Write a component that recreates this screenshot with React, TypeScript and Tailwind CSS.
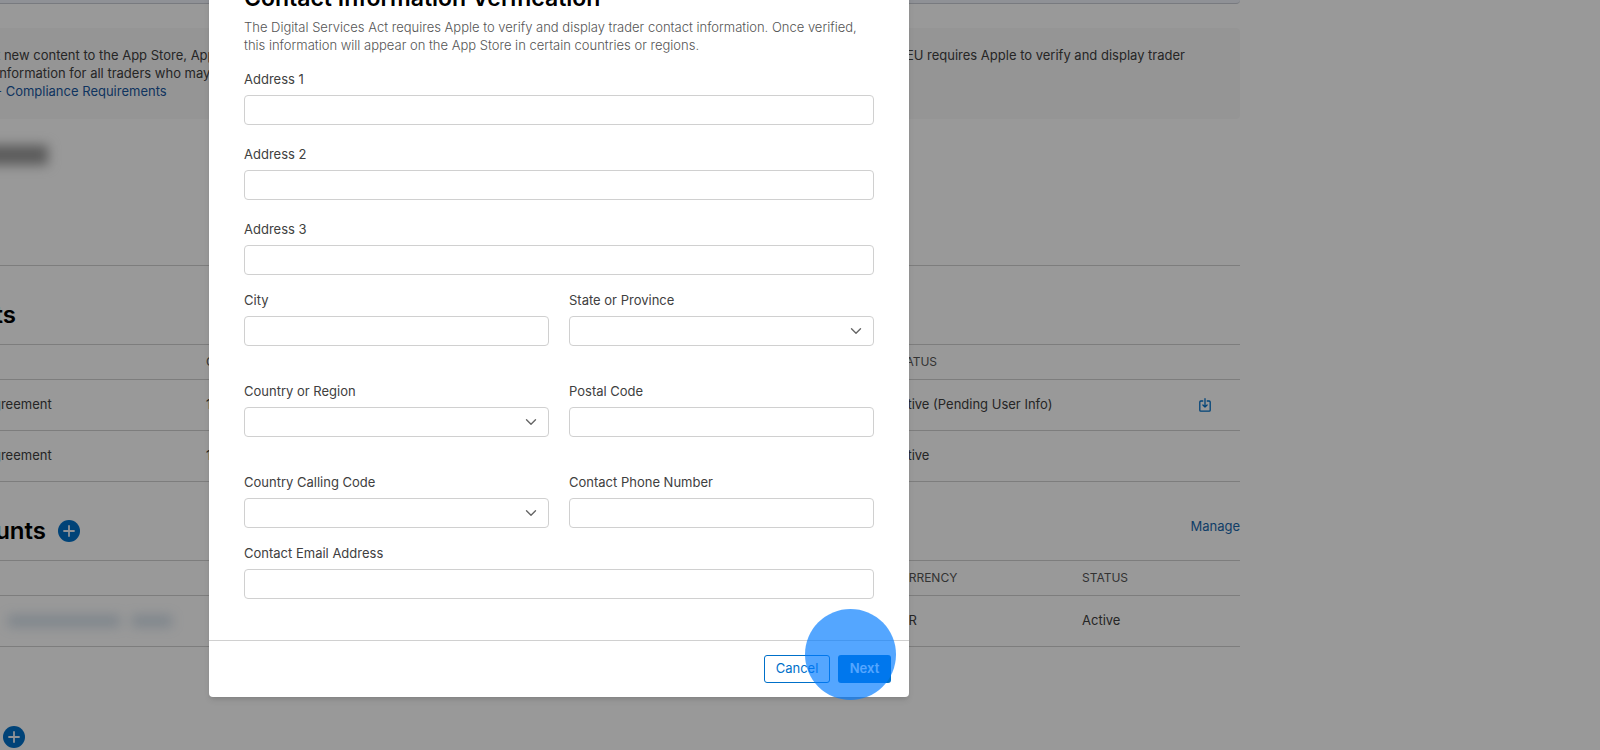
import { ReactNode } from "react";

interface FieldProps {
  id: string;
  label: string;
}

const TextField = ({ id, label }: FieldProps) => (
  <div className="flex flex-col gap-[7px]">
    <label htmlFor={id} className="leading-[18px] text-[#404040]">
      {label}
    </label>
    <input
      id={id}
      type="text"
      className="h-[30px] w-full rounded-sm border border-[#d0d0d0] bg-white px-2 outline-none"
    />
  </div>
);

const SelectField = ({ id, label }: FieldProps) => (
  <div className="flex flex-col gap-[7px]">
    <label htmlFor={id} className="leading-[18px] text-[#404040]">
      {label}
    </label>
    <div className="relative">
      <select
        id={id}
        className="block h-[30px] w-full appearance-none rounded-sm border border-[#d0d0d0] bg-white px-2 outline-none"
      >
        <option value="" />
      </select>
      <svg
        className="pointer-events-none absolute top-2.5 right-3 h-2.5 w-3"
        viewBox="0 0 12 10"
        fill="none"
        stroke="#666"
        strokeWidth="1.4"
        strokeLinecap="round"
        strokeLinejoin="round"
      >
        <path d="M1.5 2.8 6 7.3l4.5-4.5" />
      </svg>
    </div>
  </div>
);

const AddButton = ({ label }: { label: string }) => (
  <button
    aria-label={label}
    className="flex size-[22px] shrink-0 items-center justify-center rounded-full bg-[#0070c9] text-[#eef4fa]"
  >
    <svg viewBox="0 0 12 12" className="size-3" stroke="currentColor" strokeWidth="1.8" strokeLinecap="round">
      <path d="M6 1v10M1 6h10" />
    </svg>
  </button>
);

const Th = ({ children }: { children?: ReactNode }) => (
  <th className="h-[35px] p-0 text-left text-xs font-normal text-[#555]">{children}</th>
);

const DownloadIcon = () => (
  <svg
    className="h-3.5 w-3"
    viewBox="0 0 12 14"
    fill="none"
    stroke="currentColor"
    strokeWidth="1.3"
    strokeLinecap="round"
    strokeLinejoin="round"
  >
    <path d="M3.8 3H1.800a1 1 0 0 0-1 1v8.200a1 1 0 0 0 1 1h8.400a1 1 0 0 0 1-1V4a1 1 0 0 0-1-1H8.200" />
    <path d="M6 .7v8.300M3.900 7 6 9.100 8.100 7" />
  </svg>
);

const Agreements = () => (
  <section>
    <div className="flex h-[78px] items-center pt-5">
      <h2 className="flex w-8 justify-end text-2xl font-semibold text-black">Agreements</h2>
    </div>
    <table className="w-full table-fixed border-collapse">
      <colgroup>
        <col className="w-[222px]" />
        <col className="w-[685px]" />
        <col />
        <col className="w-[41px]" />
      </colgroup>
      <thead>
        <tr className="border-y border-[#d0d0d0]">
          <Th />
          <Th>COUNTRIES</Th>
          <Th>STATUS</Th>
          <Th />
        </tr>
      </thead>
      <tbody>
        <tr className="h-[51px] border-b border-[#d0d0d0]">
          <td>Agreement</td>
          <td>175</td>
          <td>Active (Pending User Info)</td>
          <td>
            <button aria-label="Download agreement" className="flex text-[#0070c9]">
              <DownloadIcon />
            </button>
          </td>
        </tr>
        <tr className="h-[51px] border-b border-[#d0d0d0]">
          <td>Agreement</td>
          <td>175</td>
          <td>Active</td>
          <td />
        </tr>
      </tbody>
    </table>
  </section>
);

const BankAccounts = () => (
  <section>
    <div className="flex h-[78px] items-center justify-between">
      <div className="flex items-center gap-3 pt-5">
        <h2 className="flex w-[62px] justify-end text-2xl font-semibold text-black">Accounts</h2>
        <AddButton label="Add bank account" />
      </div>
      <a href="#manage" className="pt-3 text-[#1a68ad]">
        Manage
      </a>
    </div>
    <table className="w-full table-fixed border-collapse">
      <colgroup>
        <col className="w-[907px]" />
        <col className="w-[191px]" />
        <col />
      </colgroup>
      <thead>
        <tr className="border-y border-[#d0d0d0]">
          <Th />
          <Th>CURRENCY</Th>
          <Th>STATUS</Th>
        </tr>
      </thead>
      <tbody>
        <tr className="h-[51px] border-b border-[#d0d0d0]">
          <td>
            <div className="flex gap-3 pl-6 blur-[6px]">
              <span className="h-3 w-28 bg-[#4a7ba8]/25" />
              <span className="h-3 w-10 bg-[#4a7ba8]/25" />
            </div>
          </td>
          <td>EUR</td>
          <td>Active</td>
        </tr>
      </tbody>
    </table>
  </section>
);

const ContactModal = () => (
  <div
    role="dialog"
    aria-labelledby="contact-title"
    className="relative -mt-14 h-fit w-[700px] rounded-b-sm bg-white shadow-md"
  >
    <div className="px-[35px] pt-10 pb-[41px]">
      <h1 id="contact-title" className="text-[23px] leading-7 font-semibold text-black">
        Contact Information Verification
      </h1>
      <p className="mt-1.5 mb-4 leading-[18px] font-light text-[#555]">
        The Digital Services Act requires Apple to verify and display trader contact information. Once verified,
        this information will appear on the App Store in certain countries or regions.
      </p>

      <form id="contact-form" className="flex flex-col gap-4">
        <div className="flex flex-col gap-5">
          <TextField id="address1" label="Address 1" />
          <TextField id="address2" label="Address 2" />
          <TextField id="address3" label="Address 3" />
        </div>
        <div className="grid grid-cols-2 gap-x-5 gap-y-9">
          <TextField id="city" label="City" />
          <SelectField id="state" label="State or Province" />
          <SelectField id="country" label="Country or Region" />
          <TextField id="postal" label="Postal Code" />
          <SelectField id="calling" label="Country Calling Code" />
          <TextField id="phone" label="Contact Phone Number" />
        </div>
        <TextField id="email" label="Contact Email Address" />
      </form>
    </div>

    <div className="flex justify-end gap-2 border-t border-[#d0d0d0] py-3.5 pr-[18px]">
      <button className="h-7 w-[66px] rounded-[3px] border border-[#0070c9] text-[#0070c9]">Cancel</button>
      <button form="contact-form" className="h-7 w-[53px] rounded-[3px] bg-[#0070c9] font-semibold text-white">
        Next
      </button>
    </div>

    {/* click highlight */}
    <div className="pointer-events-none absolute right-[13px] -bottom-[3px] size-[91px] rounded-full bg-[#007aff]/67" />
  </div>
);

export default function App() {
  return (
    <div className="relative min-h-screen overflow-hidden bg-white font-['Inter','Liberation_Sans',sans-serif] text-[13px] text-[#404040]">
      <main className="mr-[360px] -ml-4">
        <div className="h-1 rounded-b-sm border-b border-[#c8ccd4] bg-[#eef2fa]" />

        <div className="mt-6 h-[91px] rounded-sm bg-[#f9f9f9] pt-[18px] pl-3 leading-[18px]">
          <div className="flex justify-between pr-[55px]">
            <span>t new content to the App Store, Apple</span>
            <span>EU requires Apple to verify and display trader</span>
          </div>
          <p>information for all traders who may distribute</p>
          <p>
            <a href="#compliance" className="text-[#1a58a0]">
              - Compliance Requirements
            </a>
          </p>
        </div>

        <div className="h-[147px] border-b border-[#d0d0d0] pt-[26px]">
          <div className="h-5 w-16 bg-[#999] blur-[6px]" />
        </div>

        <Agreements />
        <BankAccounts />

        <div className="flex pt-[79px] pl-[19px]">
          <AddButton label="Add tax form" />
        </div>
      </main>

      <div className="absolute inset-0 flex items-start bg-black/40 pl-[209px]">
        <ContactModal />
      </div>
    </div>
  );
}
